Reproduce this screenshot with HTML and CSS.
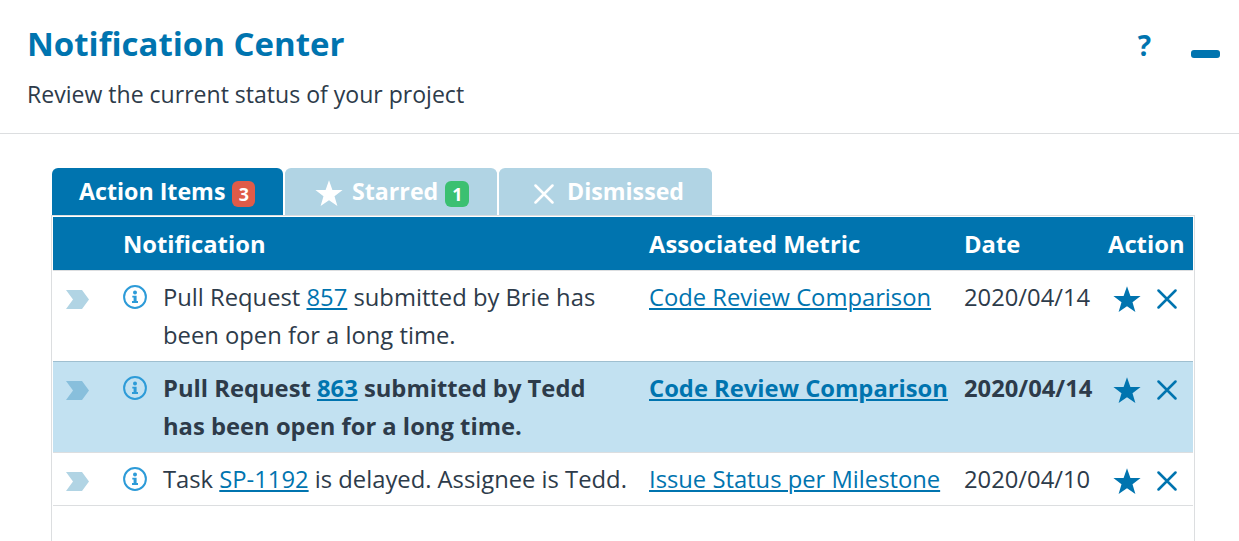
FILE: index.html
```html
<!DOCTYPE html>
<html lang="en">
<head>
<meta charset="utf-8">
<title>Notification Center</title>
<link rel="stylesheet" href="styles.css">
</head>
<body>
<svg class="defs" aria-hidden="true">
  <symbol id="star" viewBox="0 0 28 27"><path d="M14 .3 17.4 9.9 27.6 10.1 19.5 16.3 22.4 26.1 14 20.3 5.6 26.1 8.500 16.3 .4 10.1 10.600 9.900Z" fill="currentColor"/></symbol>
  <symbol id="cross" viewBox="0 0 20 20"><path d="M1.500 1.500 18.500 18.500M18.500 1.500 1.500 18.500" fill="none" stroke="currentColor" stroke-width="2.500" stroke-linecap="round"/></symbol>
  <symbol id="chevron" viewBox="0 0 23 19"><path d="M0 0H16L23 9.500 16 19H0L7 9.500Z" fill="currentColor"/></symbol>
  <symbol id="info" viewBox="0 0 24 24"><circle cx="12" cy="12" r="10.900" fill="none" stroke="currentColor" stroke-width="2"/><circle cx="12" cy="7.500" r="2" fill="currentColor"/><path d="M9.300 10.700H13.600V16H15V18H9V16H10.600V12.500H9.300Z" fill="currentColor"/></symbol>
</svg>
<header class="header">
  <div>
    <h1 class="title">Notification Center</h1>
    <p class="subtitle">Review the current status of your project</p>
  </div>
  <div class="tools"><span class="help">?</span><span class="minimize"></span></div>
</header>
<main class="content">
  <nav class="tabs">
    <div class="tab tab-items active"><span class="label">Action Items</span><span class="badge red">3</span></div>
    <div class="tab tab-starred"><svg class="star"><use href="#star"/></svg><span class="label">Starred</span><span class="badge green">1</span></div>
    <div class="tab tab-dismissed"><svg class="cross"><use href="#cross"/></svg><span class="label">Dismissed</span></div>
  </nav>
  <section class="panel">
    <div class="row head"><span></span><span class="wide">Notification</span><span>Associated Metric</span><span>Date</span><span>Action</span></div>
    <div class="row">
      <svg class="chevron"><use href="#chevron"/></svg><svg class="info"><use href="#info"/></svg>
      <span class="message">Pull Request <a>857</a> submitted by Brie has<br>been open for a long time.</span>
      <a class="metric">Code Review Comparison</a><span class="date">2020/04/14</span>
      <div class="actions"><svg class="star"><use href="#star"/></svg><svg class="cross"><use href="#cross"/></svg></div>
    </div>
    <div class="row unread">
      <svg class="chevron"><use href="#chevron"/></svg><svg class="info"><use href="#info"/></svg>
      <span class="message">Pull Request <a>863</a> submitted by Tedd<br>has been open for a long time.</span>
      <a class="metric">Code Review Comparison</a><span class="date">2020/04/14</span>
      <div class="actions"><svg class="star"><use href="#star"/></svg><svg class="cross"><use href="#cross"/></svg></div>
    </div>
    <div class="row">
      <svg class="chevron"><use href="#chevron"/></svg><svg class="info"><use href="#info"/></svg>
      <span class="message">Task <a>SP-1192</a> is delayed. Assignee is Tedd.</span>
      <a class="metric">Issue Status per Milestone</a><span class="date">2020/04/10</span>
      <div class="actions"><svg class="star"><use href="#star"/></svg><svg class="cross"><use href="#cross"/></svg></div>
    </div>
  </section>
</main>
</body>
</html>
```
FILE: styles.css
```css
* { box-sizing: border-box; }
html, body { height: 100%; }
body {
  margin: 0;
  display: flex;
  flex-direction: column;
  overflow: hidden;
  background: #fff;
  color: #2d3b4a;
  font: 23.78px/38px "Open Sans", sans-serif;
}
.defs { display: none; }
svg { display: block; flex: none; }
.header {
  flex: none;
  height: 134px;
  padding: 20px 19px 0 27px;
  display: flex;
  justify-content: space-between;
  border-bottom: 1px solid #dcdee0;
}
.title { margin: 0; font-size: 33px; line-height: 48px; font-weight: 700; color: #0074af; white-space: nowrap; }
.subtitle { margin: 8px 0 0; font-size: 23.05px; line-height: 36px; white-space: nowrap; }
.tools { display: flex; gap: 40px; padding-top: 6px; color: #0074af; }
.help { font-size: 28px; font-weight: 700; }
.minimize { width: 29px; height: 8px; margin-top: 24px; border-radius: 3px; background: #0074af; }
.content { flex: 1; min-height: 0; padding: 34px 44px 0 51px; display: flex; flex-direction: column; }
.tabs { display: flex; gap: 2px; padding-left: 1px; height: 47px; flex: none; }
.tab {
  display: flex;
  height: 47px;
  border-radius: 6px 6px 0 0;
  background: #b1d4e4;
  color: #fff;
  font-size: 23.2px;
  font-weight: 700;
  line-height: 47px;
  white-space: nowrap;
}
.tab.active { background: #0074af; }
.tab:not(.active) { box-shadow: 0 1px #a6c4d2; }
.tab-items { width: 231px; padding-left: 27px; }
.tab-starred { width: 212px; padding-left: 30px; }
.tab-dismissed { width: 213px; padding-left: 35px; }
.tab .star { margin: 12px 9px 0 0; }
.tab .cross { margin: 16px 13px 0 0; }
.badge {
  width: 23px;
  height: 26px;
  margin: 13px 0 0 7px;
  border-radius: 6px;
  font-size: 18px;
  line-height: 27px;
  text-align: center;
}
.red { background: #df5b49; }
.green { width: 24px; background: #3bc071; }
.star { width: 28px; height: 27px; }
.cross { width: 20px; height: 20px; }
.panel { flex: 1; min-height: 0; border: 1px solid #dcdee0; border-bottom: 0; padding: 1px 1px 0; }
.row {
  display: grid;
  grid-template-columns: 70px 40px 486px 315px 144px 85px;
  padding: 7px 0 7px;
  border-bottom: 1px solid #dcdee0;
  white-space: nowrap;
}
.row.head { background: #0074af; color: #fff; font-weight: 700; height: 54px; padding-top: 8px; }
.wide { grid-column: span 2; }
.row.unread { background: #c2e1f1; font-weight: 700; margin-top: -1px; border-top: 1px solid #9fbfd0; }
.chevron { width: 23px; height: 19px; margin: 12px 0 0 13px; color: #b1d4e4; }
.unread .chevron { color: #88bfdc; }
.info { width: 24px; height: 24px; margin-top: 7px; color: #2d9bd8; }
a { color: #0074af; text-decoration: underline; text-decoration-thickness: 2px; text-underline-offset: 2px; }
.actions { display: flex; gap: 15px; margin: 8px 0 0 5px; color: #0074af; }
.actions .cross { margin-top: 3px; margin-left: .5px; }
```
